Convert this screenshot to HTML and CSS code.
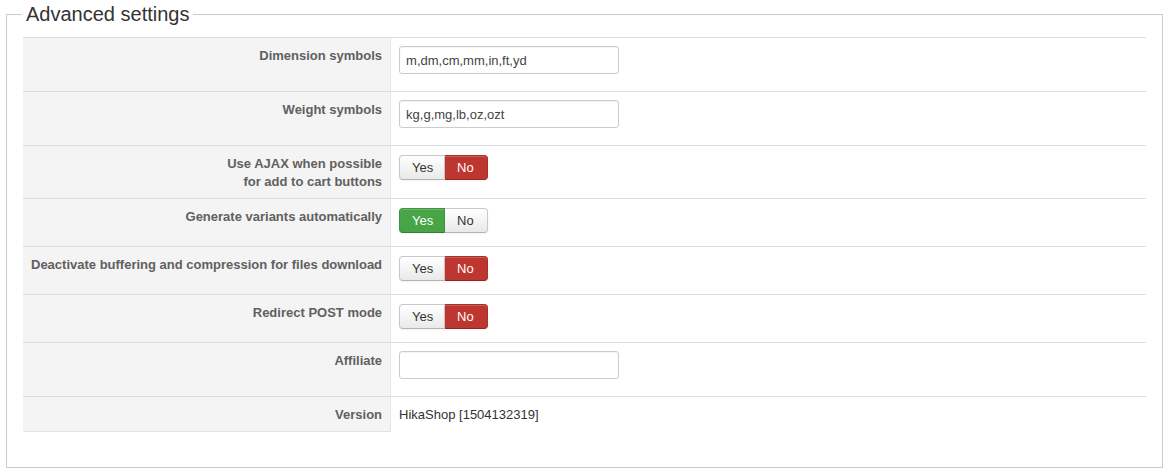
FILE: index.html
```html
<!DOCTYPE html>
<html lang="en">
<head>
    <meta charset="UTF-8">
    <title>Advanced settings</title>
    <link rel="stylesheet" href="styles.css">
</head>
<body>
    <fieldset class="adminform">
        <legend>Advanced settings</legend>
        <table class="admintable">
            <tr>
                <td class="key">Dimension symbols</td>
                <td><input type="text" class="inputbox" value="m,dm,cm,mm,in,ft,yd"></td>
            </tr>
            <tr>
                <td class="key">Weight symbols</td>
                <td><input type="text" class="inputbox" value="kg,g,mg,lb,oz,ozt"></td>
            </tr>
            <tr>
                <td class="key">Use AJAX when possible<br>for add to cart buttons</td>
                <td>
                    <div class="btn-group">
                        <span class="btn">Yes</span><span class="btn active-no">No</span>
                    </div>
                </td>
            </tr>
            <tr>
                <td class="key">Generate variants automatically</td>
                <td>
                    <div class="btn-group">
                        <span class="btn active-yes">Yes</span><span class="btn">No</span>
                    </div>
                </td>
            </tr>
            <tr>
                <td class="key">Deactivate buffering and compression for files download</td>
                <td>
                    <div class="btn-group">
                        <span class="btn">Yes</span><span class="btn active-no">No</span>
                    </div>
                </td>
            </tr>
            <tr>
                <td class="key">Redirect POST mode</td>
                <td>
                    <div class="btn-group">
                        <span class="btn">Yes</span><span class="btn active-no">No</span>
                    </div>
                </td>
            </tr>
            <tr>
                <td class="key">Affiliate</td>
                <td><input type="text" class="inputbox" value=""></td>
            </tr>
            <tr class="last">
                <td class="key">Version</td>
                <td class="version">HikaShop [1504132319]</td>
            </tr>
        </table>
    </fieldset>
</body>
</html>
```

FILE: styles.css
```css
body {
    margin: 0;
    padding: 0;
    font-family: 'Liberation Sans', Arial, sans-serif;
    font-size: 13px;
    line-height: 18px;
    color: #333;
    background-color: #fff;
}
fieldset.adminform {
    margin: 0 10px 0 6px;
    padding: 9px 16px 35px 16px;
    border: 1px solid #ccc;
    min-width: 0;
}
fieldset.adminform legend {
    margin-left: -1px;
    padding: 0 4px;
    font-size: 20px;
    line-height: 28px;
    color: #333;
}
.admintable {
    width: 100%;
    border-collapse: collapse;
    border-spacing: 0;
}
.admintable td {
    padding: 8px;
    border-top: 1px solid #ddd;
    vertical-align: top;
    text-align: left;
}
.admintable td.key {
    width: 351px;
    padding: 9px 8px 7px 8px;
    background-color: #f4f4f4;
    border-right: 1px solid #e6e6e6;
    text-align: right;
    font-weight: bold;
    color: #606060;
    white-space: nowrap;
}
.admintable tr.last td {
    border-top: 1px solid #ddd;
}
.admintable tr.last td.key {
    border-bottom: 1px solid #e2e2e2;
}
.admintable td.version {
    padding: 9px 8px 7px 8px;
    color: #333;
}
.inputbox {
    display: block;
    box-sizing: border-box;
    width: 220px;
    height: 28px;
    margin: 0 0 9px 0;
    padding: 4px 6px;
    font-family: inherit;
    font-size: 13px;
    color: #444;
    border: 1px solid #ccc;
    border-radius: 3px;
    background-color: #fff;
    box-shadow: inset 0 1px 1px rgba(0, 0, 0, 0.05);
}
.btn-group {
    display: flex;
    margin: 1px 0 5px 0;
}
.btn {
    box-sizing: border-box;
    height: 25px;
    padding: 0 12px;
    line-height: 23px;
    font-size: 13px;
    color: #333;
    border: 1px solid #c8c8c8;
    border-bottom-color: #b3b3b3;
    background-image: linear-gradient(to bottom, #fff, #e9e9e9);
    box-shadow: inset 0 1px 0 rgba(255, 255, 255, 0.2), 0 1px 2px rgba(0, 0, 0, 0.05);
}
.btn:first-child {
    border-radius: 4px 0 0 4px;
    width: 46px;
}
.btn:last-child {
    border-radius: 0 4px 4px 0;
    border-left: none;
    width: 43px;
}
.btn.active-no {
    color: #fff;
    background-image: none;
    background-color: #bd362f;
    border-color: #a9302a;
    border-bottom-color: #8e2823;
}
.btn.active-yes {
    color: #fff;
    background-image: none;
    background-color: #47a447;
    border-color: #3f923f;
    border-bottom-color: #357b35;
}
```
